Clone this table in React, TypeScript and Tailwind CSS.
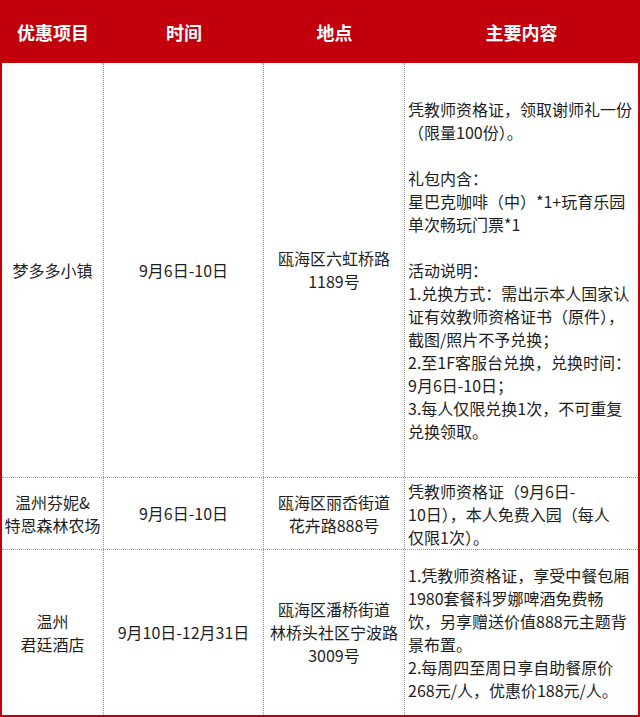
const headers = ["优惠项目", "时间", "地点", "主要内容"];

type Row = {
  height: string;
  name: string[];
  time: string;
  place: string[];
  content: string[];
  contentAlign: string;
};

const rows: Row[] = [
  {
    height: "h-[415px]",
    name: ["梦多多小镇"],
    time: "9月6日-10日",
    place: ["瓯海区六虹桥路", "1189号"],
    content: [
      "凭教师资格证，领取谢师礼一份",
      "（限量100份）。",
      "",
      "礼包内含：",
      "星巴克咖啡（中）*1+玩育乐园",
      "单次畅玩门票*1",
      "",
      "活动说明：",
      "1.兑换方式：需出示本人国家认",
      "证有效教师资格证书（原件），",
      "截图/照片不予兑换；",
      "2.至1F客服台兑换，兑换时间：",
      "9月6日-10日；",
      "3.每人仅限兑换1次，不可重复",
      "兑换领取。",
    ],
    contentAlign: "justify-center",
  },
  {
    height: "h-[72px]",
    name: ["温州芬妮&", "特恩森林农场"],
    time: "9月6日-10日",
    place: ["瓯海区丽岙街道", "花卉路888号"],
    content: ["凭教师资格证（9月6日-", "10日），本人免费入园（每人", "仅限1次）。"],
    contentAlign: "justify-start pt-[2px]",
  },
  {
    height: "flex-1",
    name: ["温州", "君廷酒店"],
    time: "9月10日-12月31日",
    place: ["瓯海区潘桥街道", "林桥头社区宁波路", "3009号"],
    content: [
      "1.凭教师资格证，享受中餐包厢",
      "1980套餐科罗娜啤酒免费畅",
      "饮，另享赠送价值888元主题背",
      "景布置。",
      "2.每周四至周日享自助餐原价",
      "268元/人，优惠价188元/人。",
    ],
    contentAlign: "justify-center",
  },
];

function Lines({ lines }: { lines: string[] }) {
  return (
    <>
      {lines.map((line, i) => (
        <div key={i} className="h-[23px] whitespace-nowrap">
          {line || "\u00a0"}
        </div>
      ))}
    </>
  );
}

export default function App() {
  return (
    <div
      className="flex h-[717px] w-[640px] flex-col border-2 border-t-0 border-[#c2000b] bg-white text-[16px] leading-[23px] text-[#1e1e1e]"
      style={{ fontFamily: '"Microsoft YaHei", "Noto Sans CJK SC", sans-serif' }}
    >
      <div className="grid h-[63px] grid-cols-[102px_160px_141px_1fr] bg-[#c2000b] text-[18px] font-bold text-white">
        {headers.map((h) => (
          <div key={h} className="flex items-center justify-center pt-[2px]">
            {h}
          </div>
        ))}
      </div>

      {rows.map((row, i) => (
        <div
          key={i}
          className={`grid grid-cols-[102px_160px_141px_1fr] ${row.height} ${
            i < rows.length - 1 ? "border-b border-dotted border-[#9a9a9a]" : ""
          }`}
        >
          <div className="flex flex-col items-center justify-center border-r border-dotted border-[#9a9a9a] text-center">
            <Lines lines={row.name} />
          </div>
          <div className="flex items-center justify-center border-r border-dotted border-[#9a9a9a] text-center">
            <span className="whitespace-nowrap">{row.time}</span>
          </div>
          <div className="flex flex-col items-center justify-center border-r border-dotted border-[#9a9a9a] text-center">
            <Lines lines={row.place} />
          </div>
          <div className={`flex flex-col pl-[3px] ${row.contentAlign}`}>
            <Lines lines={row.content} />
          </div>
        </div>
      ))}
    </div>
  );
}
